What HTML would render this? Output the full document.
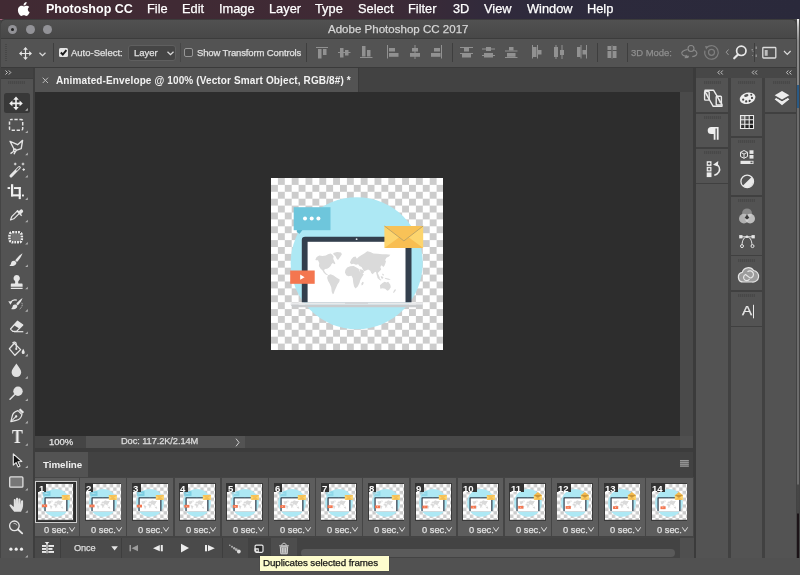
<!DOCTYPE html>
<html><head><meta charset="utf-8"><title>Adobe Photoshop CC 2017</title>
<style>
html,body{margin:0;padding:0}
body{width:800px;height:575px;overflow:hidden;position:relative;background:#515151;font-family:"Liberation Sans",sans-serif;color:#ddd;}
.a{position:absolute}
.t{position:absolute;white-space:nowrap;line-height:1;will-change:transform;-webkit-text-stroke:.25px currentColor}
#menubar{left:0;top:0;width:800px;height:19.200px;background:linear-gradient(90deg,#412a33 0%,#3f2a35 44%,#3a2a37 52%,#322a3b 60%,#2d2a3c 68%,#2a293b 100%)}
#menubar .t{font-size:12.800px;color:#fff;top:3.100px}
#win{left:0;top:19.5px;width:796.5px;height:538.5px;background:#535353;border-radius:4.5px 4.5px 0 0;overflow:hidden}
#title{left:.8px;top:19.700px;width:795.2px;height:18.5px;background:linear-gradient(#515151,#484848);border-radius:4.5px 4.5px 0 0}
#opts{left:0;top:38.5px;width:796.5px;height:28.5px;background:#535353}
.sep{position:absolute;width:1.4px;background:#3e3e3e;top:43px;height:19px}
.tl{position:absolute;width:9px;height:9px;border-radius:50%;background:#929297;top:25.200px}
.ic{position:absolute;overflow:visible}
.grip{background:repeating-linear-gradient(90deg,#484848 0 1px,#4f4f4f 1px 2px)}
.fn{top:483.700px;font-size:9.600px;-webkit-text-stroke:0;font-weight:bold;color:#fff}
.fs{top:525.700px;font-size:9.300px;color:#e2e2e2}
</style></head><body>
<div class="a" style="left:0;top:17px;width:6px;height:8px;background:#a3637c"></div>
<div id="menubar" class="a">
<svg class="ic" style="left:17.600px;top:1.500px" width="12.200" height="14.600" viewBox="0 0 12 15"><path fill="#fff" d="M8.6 0c.1 1-.3 1.900-.85 2.500-.6.650-1.450 1.100-2.250 1.050-.1-.95.350-1.900.85-2.450C6.950.45 7.900.05 8.600 0zM11.300 5.100c-.9.550-1.450 1.400-1.450 2.500 0 1.250.75 2.250 1.850 2.650-.25.800-.65 1.550-1.150 2.250-.65.900-1.300 1.800-2.350 1.800-1 0-1.300-.6-2.450-.6-1.200 0-1.550.6-2.500.65-1 .05-1.750-1-2.400-1.900C-.45 10.600-.9 7.400.5 5.500 1.150 4.550 2.250 3.950 3.400 3.950c1.050 0 1.850.65 2.500.65.600 0 1.600-.75 2.850-.65.900.05 1.950.450 2.550 1.150z"/></svg>
<span class="t" style="left:45.500px;font-weight:bold;font-size:12.500px;top:3.300px;-webkit-text-stroke:0">Photoshop CC</span>
<span class="t" style="left:146.500px">File</span>
<span class="t" style="left:182px">Edit</span>
<span class="t" style="left:218.500px">Image</span>
<span class="t" style="left:268.500px">Layer</span>
<span class="t" style="left:315px">Type</span>
<span class="t" style="left:357.500px">Select</span>
<span class="t" style="left:407.500px">Filter</span>
<span class="t" style="left:452.500px">3D</span>
<span class="t" style="left:484px">View</span>
<span class="t" style="left:526.500px">Window</span>
<span class="t" style="left:586.500px">Help</span>
</div>
<div id="win" class="a"></div>
<div class="a" style="left:0;top:19.200px;width:796.500px;height:6px;border-radius:4.500px 4.500px 0 0;background:#3c3c3c"></div>
<div id="title" class="a"></div>
<div class="a" style="left:0;top:38px;width:796.5px;height:1px;background:#3c3c3c"></div>
<div class="tl" style="left:8px"><div class="a" style="left:3px;top:3px;width:3px;height:3px;border-radius:50%;background:#222"></div></div>
<div class="tl" style="left:25.5px"></div>
<div class="tl" style="left:42.5px"></div>
<span class="t" style="left:327.500px;top:23.900px;font-size:11.500px;color:#d6d6d6;letter-spacing:.02px">Adobe Photoshop CC 2017</span>
<div id="opts" class="a"></div>
<div class="a" style="left:0;top:67px;width:796.5px;height:1px;background:#3a3a3a"></div>
<!-- grip -->
<div class="a" style="left:4.5px;top:44px;width:2px;height:17px;background:repeating-linear-gradient(#474747 0 1px,#535353 1px 2px)"></div>
<!-- move tool icon -->
<svg class="ic" style="left:18.700px;top:47px" width="13" height="13" viewBox="0 0 14 14"><g fill="#e6e6e6"><path d="M7 0l2.600 3H7.650v3.350H11V4.400L14 7l-3 2.600V7.650H7.650V11H9.600L7 14 4.400 11h1.950V7.650H3V9.600L0 7l3-2.600v1.950h3.350V3H4.400z"/></g></svg>
<svg class="ic" style="left:38.500px;top:52px" width="7" height="5" viewBox="0 0 7 5"><path d="M.5.700l3 3 3-3" fill="none" stroke="#dadada" stroke-width="1.250"/></svg>
<div class="sep" style="left:53px"></div>
<!-- checkbox checked -->
<div class="a" style="left:59px;top:48px;width:9px;height:9px;border-radius:1.500px;background:#e4e4e4"></div>
<svg class="ic" style="left:59px;top:48px" width="9" height="9" viewBox="0 0 9 9"><path d="M1.800 4.500l2 2L7.400 2.200" fill="none" stroke="#1a1a1a" stroke-width="1.900"/></svg>
<span class="t" style="left:71px;top:48px;font-size:9.5px;color:#e0e0e0">Auto-Select:</span>
<div class="a" style="left:128.300px;top:44.500px;width:48.200px;height:16px;border-radius:3px;background:#454545;border:1px solid #5f5f5f;box-sizing:border-box"></div>
<span class="t" style="left:133.500px;top:48px;font-size:9.5px;color:#e0e0e0">Layer</span>
<svg class="ic" style="left:166.5px;top:51px" width="7" height="5" viewBox="0 0 7 5"><path d="M.5.700l3 3 3-3" fill="none" stroke="#dadada" stroke-width="1.250"/></svg>
<div class="sep" style="left:180px;background:#464646"></div>
<div class="a" style="left:184.300px;top:48.200px;width:8.500px;height:8.500px;border-radius:2px;border:1px solid #969696;box-sizing:border-box;background:#4a4a4a"></div>
<span class="t" style="left:196.500px;top:48px;font-size:9.5px;color:#e0e0e0;letter-spacing:-.13px">Show Transform Controls</span>
<div class="sep" style="left:306px"></div>
<svg class="a" style="left:0;top:0" width="800" height="575" viewBox="0 0 800 575">
<g fill="#919191" stroke="none">
<!-- 1 align top -->
<rect x="316" y="47" width="12" height="1"/><rect x="318" y="49" width="3.5" height="9.5"/><rect x="323" y="49" width="3.5" height="6"/>
<!-- 2 align v centers -->
<rect x="338" y="52" width="12.5" height="1"/><rect x="340" y="48" width="3.5" height="9.5"/><rect x="345" y="50" width="3.5" height="5.5"/>
<!-- 3 align bottom -->
<rect x="360" y="57" width="12.5" height="1"/><rect x="362" y="46" width="3.5" height="10.500"/><rect x="367" y="50" width="3.5" height="6.500"/>
<!-- 4 align left -->
<rect x="387" y="45" width="1" height="13.500"/><rect x="389" y="48" width="6" height="3.500"/><rect x="389" y="53" width="9.500" height="3.800"/>
<!-- 5 align h centers -->
<rect x="414.5" y="45" width="1" height="14"/><rect x="412" y="48" width="6" height="3.500"/><rect x="410" y="53" width="10" height="3.800"/>
<!-- 6 align right -->
<rect x="441" y="45" width="1" height="13.500"/><rect x="434" y="48" width="6" height="3.500"/><rect x="431" y="53" width="9.500" height="3.800"/>
<!-- 7 dist top -->
<rect x="460" y="47" width="13" height="1"/><rect x="464" y="48" width="5" height="3.500"/><rect x="460" y="53" width="13" height="1"/><rect x="462" y="54" width="9" height="3.500"/>
<!-- 8 dist v centers -->
<rect x="482" y="48.500" width="13" height="1"/><rect x="486" y="47" width="5" height="4"/><rect x="482" y="55" width="13" height="1"/><rect x="484" y="53" width="9" height="4.500"/>
<!-- 9 dist bottom -->
<rect x="509" y="47" width="4.500" height="3.500"/><rect x="505" y="50.500" width="12.500" height="1"/><rect x="507" y="53" width="8.500" height="3.800"/><rect x="505" y="57" width="12.500" height="1"/>
<!-- 10 dist left -->
<rect x="532" y="45" width="1" height="13.500"/><rect x="533" y="47" width="3.500" height="10"/><rect x="537" y="45" width="1" height="13.500"/><rect x="538" y="50" width="3.500" height="4.500"/>
<!-- 11 dist h centers -->
<rect x="554" y="47" width="4" height="10"/><rect x="555.5" y="45" width="1" height="14"/><rect x="560" y="50" width="4" height="5"/><rect x="561.5" y="45" width="1" height="14"/>
<!-- 12 dist right -->
<rect x="577" y="47" width="3.500" height="10"/><rect x="580.5" y="45" width="1" height="13.500"/><rect x="582.500" y="50" width="3.500" height="4.500"/><rect x="586" y="45" width="1" height="13.500"/>
<!-- 13 auto align -->
<rect x="607.5" y="46" width="3.800" height="4"/><rect x="607.5" y="51" width="3.800" height="7"/><rect x="612.700" y="46" width="3.800" height="4"/><rect x="612.700" y="51" width="3.800" height="7"/><rect x="611.700" y="45" width=".8" height="14" fill="#777"/>
</g>
<!-- 3d rotate icon -->
<g fill="none" stroke="#8a8a8a" stroke-width="1.100">
<circle cx="691" cy="48.500" r="3"/>
<path d="M687.500 49.500c-4 .8-6.500 2.500-5.500 4.500 1 1.800 4 2.500 7 2.300M694.300 50c2.500 1.500 3.300 3.500 2 5-1 1-2.500 1.500-4 1.600"/>
<path d="M686 54.500l2.800 3.500-4.300.2z" fill="#8a8a8a" stroke="none"/>
</g>
<!-- roll icon -->
<g fill="none" stroke="#7e7e7e" stroke-width="1.200">
<circle cx="711.500" cy="52.300" r="3"/>
<path d="M706.800 47.500a6.800 6.800 0 1 1-1.900 3.200"/>
<path d="M705 46l3.600.6-2.400 2.800z" fill="#7e7e7e" stroke="none"/>
</g>
<path d="M728.500 49.500l-2.300 2.700 2.300 2.700" fill="none" stroke="#9a9a9a" stroke-width="1"/>
<!-- search -->
<g fill="none" stroke="#e8e8e8" stroke-width="1.700"><circle cx="741.300" cy="50.800" r="4.700"/><path d="M738 54.500l-3.800 3.800" stroke-width="2.200" stroke-linecap="round"/></g>
<!-- clipped dotted sep -->
<rect x="754" y="43" width="1" height="19" fill="#3e3e3e"/>
<g fill="#8a8a8a"><rect x="751.5" y="49" width="1.500" height="1.500"/><rect x="752.500" y="51" width="1" height="1"/><rect x="755.5" y="46.500" width="1.500" height="2.500"/><rect x="755.5" y="54.500" width="1.500" height="2.500"/><rect x="752" y="55" width="1" height="1"/></g>
<!-- workspace icon -->
<rect x="762.800" y="47.500" width="13" height="10.500" fill="none" stroke="#dcdcdc" stroke-width="1.300" rx=".8"/>
<rect x="764.700" y="50" width="3" height="5.800" fill="#bdbdbd"/>
<path d="M784 51l3.300 3.300 3.300-3.300" fill="none" stroke="#ddd" stroke-width="1.200"/>
</svg>
<div class="sep" style="left:451.500px"></div>
<div class="sep" style="left:596.500px"></div>
<div class="sep" style="left:626.500px"></div>
<span class="t" style="left:631px;top:48px;font-size:9.5px;color:#8f8f8f;letter-spacing:-.05px">3D Mode:</span>
<!-- left toolbar -->
<div class="a" style="left:0;top:68px;width:33.5px;height:490px;background:#535353"></div>
<div class="a" style="left:0;top:68px;width:33.5px;height:9.5px;background:#434343"></div>
<div class="a" style="left:0;top:77.500px;width:33.5px;height:1px;background:#3d3d3d"></div>
<div class="a" style="left:33px;top:68px;width:2px;height:490px;background:#3e3e3e"></div>
<div class="a" style="left:0;top:19.5px;width:1px;height:538.5px;background:#444"></div>
<svg class="a" style="left:0;top:0" width="800" height="575" viewBox="0 0 800 575">
<path d="M5.500 70.500l2 2-2 2M8.800 70.500l2 2-2 2" fill="none" stroke="#c8c8c8" stroke-width="1"/>
</svg>
<div class="a grip" style="left:8px;top:80.500px;width:17px;height:3px"></div>
<div class="a" style="left:4px;top:92.800px;width:25.800px;height:19.800px;border-radius:2.500px;background:#383838"></div>
<!-- tab bar + canvas -->
<div class="a" style="left:35px;top:68px;width:658.5px;height:24px;background:#424242"></div>
<div class="a" style="left:35px;top:68px;width:323px;height:24px;background:#535353"></div>
<div class="a" style="left:358px;top:68px;width:1px;height:24px;background:#3b3b3b"></div>
<div class="a" style="left:35px;top:92px;width:644.5px;height:343.500px;background:#2d2d2d"></div>
<div class="a" style="left:679.5px;top:92px;width:14px;height:343.500px;background:#4a4a4a"></div>
<svg class="ic" style="left:41.800px;top:76.600px" width="7" height="7" viewBox="0 0 7 7"><path d="M.7.700l5.300 5.300M6 .7L.7 6" stroke="#bdbdbd" stroke-width="1" fill="none"/></svg>
<span class="t" style="left:56px;top:76.300px;font-size:10px;font-weight:bold;color:#f2f2f2;letter-spacing:.13px;-webkit-text-stroke:0">Animated-Envelope @ 100% (Vector Smart Object, RGB/8#) *</span>
<!-- status bar -->
<div class="a" style="left:35px;top:435.5px;width:658.5px;height:13px;background:#484848"></div>
<div class="a" style="left:35px;top:435.5px;width:50.500px;height:13px;background:#454545"></div>
<div class="a" style="left:86px;top:435.5px;width:158.500px;height:13px;background:#535353"></div>
<div class="a" style="left:679.5px;top:435.5px;width:14px;height:13px;background:#4f4f4f"></div>
<div class="a" style="left:35px;top:448.200px;width:658.5px;height:3.800px;background:#3c3c3c"></div>
<span class="t" style="left:49.200px;top:437px;font-size:9.5px;color:#e4e4e4">100%</span>
<span class="t" style="left:121.300px;top:437.100px;font-size:9.300px;color:#dedede;letter-spacing:-.1px">Doc: 117.2K/2.14M</span>
<svg class="ic" style="left:235px;top:437.500px" width="5" height="9" viewBox="0 0 5 9"><path d="M1 .7l3 3.800-3 3.800" stroke="#d0d0d0" stroke-width="1" fill="none"/></svg>
<!-- timeline panel -->
<div class="a" style="left:35px;top:452px;width:658.5px;height:24.500px;background:#424242"></div>
<div class="a" style="left:35px;top:452px;width:53px;height:24.500px;background:#535353"></div>
<div class="a" style="left:35px;top:476.500px;width:658.5px;height:61px;background:#4a4a4a"></div>
<div class="a" style="left:35px;top:537.500px;width:658.5px;height:20.500px;background:#4a4a4a"></div>
<span class="t" style="left:43px;top:459.500px;font-size:9.800px;font-weight:bold;color:#f0f0f0;letter-spacing:-.05px;-webkit-text-stroke:0">Timeline</span>
<svg class="ic" style="left:680px;top:460.300px" width="8.800" height="6.800" viewBox="0 0 8.800 6.800"><rect width="8.800" height="6.800" fill="#666"/><path d="M0 .5h8.800M0 2.400h8.800M0 4.300h8.800M0 6.200h8.800" stroke="#9a9a9a" stroke-width="1"/></svg>
<!-- right dock -->
<div class="a" style="left:693.5px;top:68px;width:103px;height:490px;background:#414141"></div>
<div class="a" style="left:693.300px;top:68px;width:2.500px;height:490px;background:#3b3b3b"></div>
<div class="a" style="left:696px;top:68px;width:100.500px;height:9.500px;background:#474747"></div>
<div class="a" style="left:696.200px;top:78px;width:31.800px;height:480px;background:#535353"></div>
<div class="a" style="left:730.500px;top:78px;width:31.800px;height:480px;background:#535353"></div>
<div class="a" style="left:764.800px;top:78px;width:31.700px;height:480px;background:#535353"></div>
<!-- right dock panel gaps -->
<div class="a" style="left:696.200px;top:112px;width:31.800px;height:1.500px;background:#404040"></div>
<div class="a" style="left:696.200px;top:147.200px;width:31.800px;height:1.500px;background:#404040"></div>
<div class="a" style="left:696.200px;top:182.500px;width:31.800px;height:1.500px;background:#404040"></div>
<div class="a" style="left:730.500px;top:136px;width:31.800px;height:1.500px;background:#404040"></div>
<div class="a" style="left:730.500px;top:195.200px;width:31.800px;height:1.500px;background:#404040"></div>
<div class="a" style="left:730.500px;top:254.700px;width:31.800px;height:1.500px;background:#404040"></div>
<div class="a" style="left:730.500px;top:290px;width:31.800px;height:1.500px;background:#404040"></div>
<div class="a" style="left:730.500px;top:325.500px;width:31.800px;height:1.500px;background:#404040"></div>
<div class="a" style="left:764.800px;top:112px;width:31.700px;height:1.500px;background:#404040"></div>
<div class="a grip" style="left:703.500px;top:80.500px;width:17px;height:3px"></div>
<div class="a grip" style="left:703.500px;top:116px;width:17px;height:3px"></div>
<div class="a grip" style="left:703.500px;top:151.200px;width:17px;height:3px"></div>
<div class="a grip" style="left:738px;top:80.500px;width:17px;height:3px"></div>
<div class="a grip" style="left:738px;top:140px;width:17px;height:3px"></div>
<div class="a grip" style="left:738px;top:199.200px;width:17px;height:3px"></div>
<div class="a grip" style="left:738px;top:258.700px;width:17px;height:3px"></div>
<div class="a grip" style="left:738px;top:294px;width:17px;height:3px"></div>
<div class="a grip" style="left:772.500px;top:80.500px;width:17px;height:3px"></div>
<svg class="a" style="left:0;top:0" width="800" height="575" viewBox="0 0 800 575">
<g fill="none" stroke="#c4c4c4" stroke-width="1">
<path d="M719.700 70.500l-1.800 2 1.800 2M722.700 70.500l-1.800 2 1.800 2"/>
<path d="M754 70.500l-1.800 2 1.800 2M757 70.500l-1.800 2 1.800 2"/>
<path d="M788.300 70.500l-1.800 2 1.800 2M791.300 70.500l-1.800 2 1.800 2"/>
</g>
<!-- device/3d icon -->
<g fill="none" stroke="#ececec" stroke-width="1.400" stroke-linejoin="round">
<path d="M705 90.200h8.500l8.500 14.300v1.800h-8.800L705 92z"/>
<rect x="704.600" y="91.500" width="4.600" height="8.600" rx=".8"/>
<rect x="716.200" y="96.200" width="5.200" height="8.800" rx=".8"/>
<path d="M706.500 93l2 5.500M718 98l2 5" stroke-width=".8"/>
</g>
<!-- paragraph -->
<path d="M711.300 126.900h7.300v12.900h-1.800V128.500h-1.300v11.300h-1.800v-5.700h-2.400a3.600 3.600 0 0 1 0-7.200z" fill="#efefef"/>
<!-- actions/history icon -->
<g fill="#ececec"><rect x="706.700" y="161.200" width="4.800" height="4.700"/><rect x="706.700" y="166.800" width="4.800" height="4.700"/><rect x="706.700" y="172.400" width="4.800" height="4.700"/></g>
<g fill="#4a4a4a"><rect x="708.600" y="162.300" width="1" height="2.500"/><rect x="707.850" y="163.050" width="2.500" height="1"/><rect x="708.600" y="167.900" width="1" height="2.500"/><rect x="707.850" y="168.650" width="2.500" height="1"/></g>
<path d="M714.300 175.300c4.500-1.300 6.300-5 4.800-8.300-.5-1.200-1.300-2-2.300-2.700" fill="none" stroke="#ececec" stroke-width="1.500"/>
<path d="M713 164.800l5.300-3.700-.5 5.500z" fill="#ececec"/>
<!-- palette -->
<g transform="rotate(-14 747.600 98.300)"><ellipse cx="747.600" cy="98.300" rx="8" ry="5.600" fill="#ededed"/>
<circle cx="743" cy="98.500" r="1.100" fill="#444"/><circle cx="745.500" cy="101" r="1.100" fill="#444"/><circle cx="749" cy="101.300" r="1.100" fill="#444"/><circle cx="752" cy="99" r="1.100" fill="#444"/><circle cx="752" cy="95.800" r="1" fill="#444"/><ellipse cx="747" cy="95.300" rx="2.200" ry="1.300" fill="#535353"/></g>
<!-- swatches grid -->
<defs><linearGradient id="sw" x1="0" y1="0" x2="1" y2="1"><stop offset="0" stop-color="#9a9a9a"/><stop offset=".5" stop-color="#333"/><stop offset="1" stop-color="#000"/></linearGradient></defs>
<rect x="740" y="115" width="14" height="14" fill="url(#sw)"/>
<path d="M740.500 115.500h13v13h-13zM744.800 115v14M749.200 115v14M740 119.800h14M740 124.200h14" fill="none" stroke="#eaeaea" stroke-width="1.100"/>
<!-- 3d cube + squares -->
<g fill="none" stroke="#e6e6e6" stroke-width="1"><path d="M744 150.500l3.500 1.800v4.200l-3.500 1.800-3.500-1.800v-4.200zM740.500 152.300l3.500 1.800 3.500-1.800M744 154.100v4.200"/></g>
<rect x="749.500" y="150.300" width="4" height="3.600" fill="#e6e6e6"/><rect x="749.500" y="155" width="4" height="3.600" fill="#e6e6e6"/><rect x="740.500" y="160.800" width="13" height="3.200" fill="#e6e6e6"/><rect x="750.500" y="161.600" width="2" height="1.600" fill="#555"/>
<!-- adjustments -->
<circle cx="747.200" cy="181.400" r="6.300" fill="none" stroke="#e8e8e8" stroke-width="1.300"/>
<path d="M742.750 185.850a6.300 6.300 0 0 0 8.900-8.900z" fill="#e8e8e8"/>
<!-- channels venn -->
<circle cx="747" cy="213.300" r="4.900" fill="#8a8a8a"/><circle cx="743.900" cy="218.600" r="4.900" fill="#c2c2c2" fill-opacity=".85"/><circle cx="750.100" cy="218.600" r="4.900" fill="#dadada" fill-opacity=".8"/>
<path d="M747 214.500l2.300 3.300-2.300 1.600-2.300-1.600z" fill="#3a3a3a"/>
<!-- paths -->
<g transform="translate(0 .8)"><g fill="none" stroke="#e6e6e6" stroke-width="1"><path d="M741 236h12M742 245c0-6 2.500-9 5-9s5 3 5 9"/></g>
<rect x="739.200" y="234.300" width="3.300" height="3.300" fill="#e6e6e6"/><rect x="751.500" y="234.300" width="3.300" height="3.300" fill="#e6e6e6"/><circle cx="747" cy="236" r="1.300" fill="#e6e6e6"/>
<circle cx="742" cy="245.300" r="1.500" fill="#535353" stroke="#e6e6e6" stroke-width="1"/><circle cx="752.500" cy="245.300" r="1.500" fill="#535353" stroke="#e6e6e6" stroke-width="1"/>
</g>
<!-- CC cloud -->
<g fill="#9c9c9c" stroke="#e6e6e6" stroke-width="1.200"><path d="M743.300 282a4.900 4.900 0 0 1-1-9.700 6.300 6.300 0 0 1 11.300-1.800 5.800 5.800 0 0 1-1.600 11.500z"/></g>
<g fill="none" stroke="#e6e6e6" stroke-width="1.200"><path d="M749.500 279a3.200 3.200 0 0 1-5.500 0 3.200 3.200 0 0 1 1.500-4.500l4.500 3.500a3.600 3.600 0 1 0-2.500-6.300"/></g>
<!-- glyphs A| -->
<rect x="753" y="304.800" width="1" height="13.500" fill="#e8e8e8"/>
<!-- layers icon -->
<path d="M782 91l7.300 4.200-7.300 4.200-7.300-4.200z" fill="#ececec"/>
<path d="M776.300 98.300l-1.600.9 7.300 4.200 1.600-.9 5.700-3.300-1.600-.9-5.700 3.300z" fill="#ececec"/>
<path d="M776.300 98.300l-1.600.9 7.300 6 7.300-6-1.600-.9-5.700 3.300z" fill="#ececec"/>
</svg>
<span class="t" style="left:742px;top:304.300px;font-size:13.500px;color:#e8e8e8;transform:scaleX(1.12);transform-origin:0 0">A</span>
<svg class="a" style="left:0;top:0" width="800" height="575" viewBox="0 0 800 575">
<defs><path id="ct" d="M0 0v-2.600l-2.600 2.600z"/></defs>
<g fill="#b4b4b4">
<use href="#ct" x="27.800" y="110.700"/><use href="#ct" x="27.800" y="133"/><use href="#ct" x="27.800" y="155.200"/><use href="#ct" x="27.800" y="177.600"/><use href="#ct" x="27.800" y="199.900"/><use href="#ct" x="27.800" y="222.300"/><use href="#ct" x="27.800" y="244.600"/><use href="#ct" x="27.800" y="267"/><use href="#ct" x="27.800" y="289.300"/><use href="#ct" x="27.800" y="311.700"/><use href="#ct" x="27.800" y="334"/><use href="#ct" x="27.800" y="356.400"/><use href="#ct" x="27.800" y="378.700"/><use href="#ct" x="27.800" y="401.100"/><use href="#ct" x="27.800" y="423.400"/><use href="#ct" x="27.800" y="445.800"/><use href="#ct" x="27.800" y="468.100"/><use href="#ct" x="27.800" y="490.500"/><use href="#ct" x="27.800" y="512.800"/><use href="#ct" x="27.800" y="557.500"/>
</g>
<!-- 0 move -->
<path fill="#f0f0f0" d="M16 96.600l2.800 3.200h-2v2.800h2.800v-2l3.200 2.800-3.200 2.800v-2h-2.800v2.800h2l-2.800 3.200-2.800-3.200h2v-2.800h-2.800v2l-3.200-2.800 3.200-2.800v2h2.800v-2.800h-2z"/>
<!-- 1 marquee -->
<rect x="9.500" y="119.500" width="13.200" height="10.700" rx="1.500" fill="none" stroke="#e4e4e4" stroke-width="1.500" stroke-dasharray="3.300 1.700" stroke-dashoffset="1.6"/>
<!-- 2 poly lasso -->
<g fill="none" stroke="#e4e4e4" stroke-width="1.400" stroke-linejoin="round"><path d="M14.600 150.300L10 141.300l7.600 3.400 5-4.300-1.400 8.300-5.200 1.700"/><circle cx="14.800" cy="150.300" r="1.300"/><path d="M13.800 151.300l-3.300 2.300M15.300 151.600l-1.300 2.600"/></g>
<!-- 3 wand -->
<path d="M11 176l8.300-8.500" stroke="#e6e6e6" stroke-width="3" stroke-linecap="round" fill="none"/>
<path d="M16.800 170l2.300-2.300" stroke="#535353" stroke-width="1.200" stroke-linecap="round" fill="none"/>
<g stroke="#e6e6e6" stroke-width="1" fill="none"><path d="M15.200 162.700v2.600M13.900 164h2.600M23 162.700v2.600M21.700 164h2.600M23.700 168.300v2.600M22.400 169.600h2.600"/></g>
<!-- 4 crop -->
<g fill="#f0f0f0"><rect x="11" y="184.200" width="2.200" height="12.200"/><rect x="11" y="194.300" width="9.800" height="2.100"/><rect x="7.600" y="187.100" width="2.500" height="1.900"/><rect x="14" y="187.100" width="6.800" height="1.900"/><rect x="18.700" y="187.100" width="2.100" height="12"/><rect x="22" y="194.500" width="1.900" height="1.900"/></g>
<!-- 5 eyedropper -->
<g><path d="M10.500 220l1.200-3.300 6-6 2.100 2.100-6 6z" fill="none" stroke="#e6e6e6" stroke-width="1.200" stroke-linejoin="round"/><path d="M16.300 211.300l4.900 4.900 1-1-1.200-1.200 1.600-1.600a1.700 1.700 0 0 0-2.500-2.500l-1.600 1.600-1.200-1.200z" fill="#e6e6e6"/></g>
<!-- 6 patch -->
<rect x="11.300" y="233.300" width="9" height="7.700" rx="1" fill="#747474"/>
<rect x="9.500" y="232.300" width="12.300" height="10" rx="3" fill="none" stroke="#2e2e2e" stroke-width="2.500"/>
<rect x="9.500" y="232.300" width="12.300" height="10" rx="3" fill="none" stroke="#ececec" stroke-width="2.600" stroke-dasharray="2 .750"/>
<!-- 7 brush -->
<path d="M22.500 253.300c-2.500 1.500-5.500 4.500-7.300 7l1.800 1.600c2.200-2.200 4.700-5.800 5.500-8.600z" fill="#e6e6e6"/>
<path d="M14.500 260.800c-1.800-.3-3 .6-3.400 2.200-.3 1.300-.8 2.300-1.700 2.900 2.300.6 5.300 0 6.700-2 .6-1 .3-2.400-1.600-3.100z" fill="#e6e6e6"/>
<!-- 8 stamp -->
<path d="M16.700 275a3.200 3.200 0 0 1 2 5.700c-.6.600-.6 1.600-.3 2.800h3.200c.6 0 1 .4 1 1v2.300H10.800v-2.300c0-.6.400-1 1-1H15c.3-1.200.3-2.200-.3-2.800a3.200 3.200 0 0 1 2-5.700zM10.800 287.800h11.800v1.200H10.800z" fill="#e6e6e6"/>
<!-- 9 history brush -->
<path d="M22.500 298c-2.300 1.300-4.800 3.800-6.300 6l1.600 1.400c1.900-1.900 4-5 4.700-7.400z" fill="#e6e6e6"/>
<path d="M15.600 304.600c-1.600-.3-2.700.5-3 2-.3 1.100-.7 2-1.500 2.500 2 .6 4.700 0 5.900-1.700.6-.9.300-2.200-1.400-2.800z" fill="#e6e6e6"/>
<path d="M10.500 302.500c1.500-2.300 3.800-3 6.300-2.300" fill="none" stroke="#e6e6e6" stroke-width="1.200"/><path d="M8.300 301.300l4 .3-1.800 3.200z" fill="#e6e6e6"/>
<path d="M21.800 302.800c1 2 .3 4.700-2.200 6.300" fill="none" stroke="#c8c8c8" stroke-width="1" stroke-dasharray="1 1"/>
<!-- 10 eraser -->
<path d="M17.500 321.200l5.300 3.800-6.300 6.300h-3.700l-2.300-2.300z" fill="#535353" stroke="#e6e6e6" stroke-width="1.200" stroke-linejoin="round"/>
<path d="M17.500 321.200l5.300 3.800-3.600 3.600-5.500-3.600z" fill="#e6e6e6"/>
<path d="M14 331.700h9.300" stroke="#e6e6e6" stroke-width="1.200"/>
<!-- 11 bucket -->
<path d="M14.300 343.300l6.300 6.300-5.700 5.700-5.500-6.500z" fill="none" stroke="#e6e6e6" stroke-width="1.300" stroke-linejoin="round"/>
<path d="M16.300 349v-4.800a2 2 0 0 0-3.800-1" fill="none" stroke="#e6e6e6" stroke-width="1.200"/><circle cx="16.300" cy="349" r="1.100" fill="#e6e6e6"/>
<path d="M23.200 348.800c.8 1.500 1.500 2.700 1.500 3.600a1.500 1.500 0 0 1-3 0c0-.9.700-2.100 1.500-3.600z" fill="#e6e6e6"/>
<!-- 12 blur drop -->
<path d="M16.400 363.500c2.300 3.500 4.800 6 4.800 8.800a4.800 4.800 0 0 1-9.600 0c0-2.800 2.500-5.300 4.800-8.800z" fill="#e0e0e0"/>
<!-- 13 dodge -->
<circle cx="18" cy="391.300" r="4.700" fill="#e0e0e0"/><path d="M14.500 394.800L10 399.300" stroke="#e0e0e0" stroke-width="1.500" stroke-linecap="round"/>
<!-- 14 pen -->
<g transform="translate(16.700 415.800) rotate(45)"><path d="M-2.600-7.800h5.200v2.300h-5.200z" fill="#e6e6e6"/><path d="M-2.800-4.600h5.600c1.800 3 2 5.500 0 8.200L0 8.300l-2.800-4.700c-2-2.700-1.800-5.200 0-8.200z" fill="none" stroke="#e6e6e6" stroke-width="1.200" stroke-linejoin="round"/><path d="M0 8V1.500" stroke="#e6e6e6" stroke-width="1"/><circle cx="0" cy=".8" r="1.200" fill="#e6e6e6"/></g>
<!-- 16 path select arrow -->
<path d="M13.300 453.800v11.300l2.800-2.500 2 4.300 1.900-.9-2-4.200 3.800-.3z" fill="#111" stroke="#e8e8e8" stroke-width="1.100" stroke-linejoin="round"/>
<!-- 17 rect -->
<rect x="9.700" y="476.900" width="13.200" height="10.300" rx="1" fill="#777" stroke="#e0e0e0" stroke-width="1.300"/>
<!-- 18 hand -->
<path transform="translate(17.700 0) scale(1.120 1) translate(-16.400 0)" d="M13.300 511.800c-1.300-1.500-2.800-4-4.100-6.100-.5-.9.700-1.800 1.500-1 .8.900 1.500 1.800 2.200 2.300V500c0-1.200 1.700-1.200 1.800 0l.2 4.500v-5.800c0-1.300 1.900-1.300 1.900 0v5.600l.3-5c0-1.200 1.800-1.200 1.800 0v5.500l.5-3.800c.1-1.200 1.800-1.100 1.800.1 0 3.300.2 5.300-.6 7.700-.4 1.200-.9 2.100-1.200 3z" fill="#e0e0e0"/>
<!-- 19 zoom -->
<circle cx="14.400" cy="525.800" r="4.800" fill="none" stroke="#e6e6e6" stroke-width="1.300"/><path d="M18 529.500l4.200 3.800" stroke="#e6e6e6" stroke-width="1.800" stroke-linecap="round"/><path d="M13.500 523.300a2.800 2.800 0 0 1 3.300 2" fill="none" stroke="#ccc" stroke-width=".9"/>
<!-- 20 dots -->
<circle cx="10.900" cy="549.200" r="1.600" fill="#ececec"/><circle cx="16.200" cy="549.200" r="1.600" fill="#ececec"/><circle cx="21.500" cy="549.200" r="1.600" fill="#ececec"/>
</svg>
<span class="t" style="left:11.700px;top:429px;font-family:'Liberation Serif',serif;font-weight:bold;font-size:17.800px;color:#ececec;transform:scaleX(.9);transform-origin:0 0;-webkit-text-stroke:0">T</span>
<svg width="0" height="0" style="position:absolute"><defs>
<pattern id="chk" width="13.800" height="13.800" patternUnits="userSpaceOnUse"><rect width="13.800" height="13.800" fill="#fff"/><rect x="6.900" width="6.900" height="6.900" fill="#ccc"/><rect y="6.900" width="6.900" height="6.900" fill="#ccc"/></pattern>
<pattern id="chk2" width="6.800" height="6.800" patternUnits="userSpaceOnUse"><rect width="6.800" height="6.800" fill="#fff"/><rect x="3.400" width="3.400" height="3.400" fill="#ccc"/><rect y="3.400" width="3.400" height="3.400" fill="#ccc"/></pattern>
<symbol id="art" viewBox="0 0 172.500 172.500">
<circle cx="85.700" cy="85.200" r="66" fill="#ade8f4"/>
<path d="M30.800 124.500V62a3.300 3.300 0 0 1 3.300-3.300h103.100a3.300 3.300 0 0 1 3.300 3.300v62.500z" fill="#333f4d"/>
<rect x="36.600" y="63.800" width="97.900" height="60.700" fill="#fff"/>
<circle cx="85.600" cy="61.200" r=".9" fill="#dfe6ea"/>
<g fill="#dadada"><path transform="translate(40.900 70.200) scale(.08696)" d="M40 130L55 100L85 85L120 90L160 85L185 70L215 60L235 75L250 95L245 120L255 145L270 175L262 185L240 170L225 185L215 205L195 225L175 235L150 240L140 255L150 275L165 290L185 305L175 310L155 300L135 280L120 255L100 235L80 205L85 170L70 140L45 140z M245 55L290 45L335 50L345 70L325 100L300 135L285 120L270 90L250 75z M185 310L215 300L250 315L285 340L320 360L315 385L295 415L280 450L262 490L250 525L240 530L228 500L222 450L205 410L185 375L175 340z M405 222L440 208L480 205L507 218L537 235L552 270L577 290L597 300L577 330L557 365L547 400L527 440L502 462L485 440L475 395L470 345L455 318L420 322L395 310L380 280L385 250z"/><path transform="translate(78.900 70.200) scale(.08696)" d="M0 165L15 130L40 100L65 95L80 120L100 100L130 80L165 60L200 35L235 45L270 60L320 65L370 70L420 70L465 75L450 95L420 110L405 140L395 170L400 200L385 215L365 195L350 215L360 245L340 265L320 285L300 270L280 280L262 300L245 285L235 260L210 245L190 255L165 265L150 245L135 215L110 205L95 185L70 190L40 180L15 185z M110 240L150 250L165 275L140 300L120 280z M300 270L320 285L335 320L350 350L330 345L310 315z M145 385L160 395L150 420L135 430L132 405z M345 425L375 400L400 385L420 395L440 385L465 420L470 450L450 480L430 490L405 465L375 460L350 465z M520 470L530 480L510 510L495 515L505 490z M400 130L415 150L405 185L390 210L385 195L398 165z M20 120L35 110L40 135L25 145z M310 320L340 350L365 365L350 370L320 345z M355 320L385 330L380 350L360 345z M400 340L450 350L470 365L440 362L405 352z M375 290L390 300L385 320L372 305z"/></g>
<path d="M19.600 124.500h132.200v2.300H19.600z" fill="#e9eaeb"/>
<path d="M19.600 126.800h132.200c-1 1.500-2.500 2.400-4.500 2.400H24.100c-2 0-3.500-.9-4.500-2.400z" fill="#c9cbcd"/>
<rect x="74" y="124.500" width="23" height="1.200" fill="#cfd1d3"/>
<rect x="113.400" y="48" width="38.800" height="21.900" fill="#fdd56e"/>
<path d="M113.400 69.900l14.500-10.500 5 3.300 5-3.300 14.300 10.500z" fill="#f8be52"/>
<path d="M113.400 48h38.800l-19.300 14.700z" fill="#f8c257"/>
<path d="M113.400 48l19.500 14.900 19.300-14.900" fill="none" stroke="#a89463" stroke-width=".7"/>
</symbol>
<symbol id="flap" viewBox="0 0 172.500 172.500"><path d="M113.400 48.500l19.400-15 19.400 15z" fill="#f3b94c"/><path d="M113.400 48h38.800l-19.400 13z" fill="#c9953a"/></symbol>
<symbol id="org" viewBox="0 0 172.500 172.500">
<rect x="19.200" y="92.500" width="24.500" height="13.300" fill="#f4764f"/>
<path d="M29.200 96.600l4.400 2.600-4.400 2.600z" fill="#fff"/>
</symbol>
<symbol id="bub" viewBox="0 0 172.500 172.500">
<path d="M25.800 51.500h6l-3.200 4.300-2.800-1.500z" fill="#58b4cb"/>
<rect x="22.700" y="29.200" width="36.800" height="23" fill="#6ec6dc"/>
<circle cx="34" cy="40.500" r="2" fill="#fff"/><circle cx="40.700" cy="40.500" r="2" fill="#fff"/><circle cx="47.400" cy="40.500" r="2" fill="#fff"/>
</symbol>
</defs></svg>
<svg class="a" style="left:271.100px;top:177.800px" width="172" height="172.100"><rect width="172" height="172.100" fill="url(#chk)"/><use href="#art" width="172.500" height="172.500"/><use href="#org" width="172.500" height="172.500"/><use href="#bub" width="172.500" height="172.500"/></svg>
<!-- timeline frames -->
<div class="a" style="left:35px;top:476.500px;width:658.500px;height:61px;background:#454545"></div>
<div class="a" style="left:35.20px;top:478px;width:43.62px;height:58.200px;background:#5d5d5d"></div>
<div class="a" style="left:35.400px;top:480.600px;width:41.600px;height:42.300px;border:1.300px solid #cdcdcd;box-sizing:border-box;background:#2e2e2e"></div>
<div class="a" style="left:37.62px;top:483.300px;width:36.500px;height:37.300px;background:#3a3a3a"></div>
<svg class="a" style="left:38.42px;top:484.100px" width="35" height="35.800"><rect width="35" height="35.800" fill="url(#chk2)"/></svg>
<svg class="a" style="left:37.92px;top:485px" width="36.200" height="36.200"><use href="#art"/><use href="#org" x="0.00" y="0.00"/><use href="#bub" opacity=".75"/></svg>
<div class="a" style="left:37.62px;top:483.300px;width:8.6px;height:8.800px;background:#333"></div>
<span class="t fn" style="left:38.83px">1</span>
<span class="t fs" style="left:44.12px">0 sec.</span>
<svg class="ic" style="left:68.83px;top:527.200px" width="6" height="5" viewBox="0 0 6 5"><path d="M.3.300l2.700 4.100L5.700.3" fill="none" stroke="#dedede" stroke-width="1"/></svg>
<div class="a" style="left:80.30px;top:478px;width:45.70px;height:58.200px;background:#5d5d5d"></div>
<div class="a" style="left:84.80px;top:483.300px;width:36.500px;height:37.300px;background:#3a3a3a"></div>
<svg class="a" style="left:85.60px;top:484.100px" width="35" height="35.800"><rect width="35" height="35.800" fill="url(#chk2)"/></svg>
<svg class="a" style="left:85.10px;top:485px" width="36.200" height="36.200"><use href="#art"/><use href="#org" x="0.42" y="0.15"/><use href="#bub" opacity=".75"/></svg>
<div class="a" style="left:84.80px;top:483.300px;width:8.6px;height:8.800px;background:#333"></div>
<span class="t fn" style="left:86.00px">2</span>
<span class="t fs" style="left:91.30px">0 sec.</span>
<svg class="ic" style="left:116.00px;top:527.200px" width="6" height="5" viewBox="0 0 6 5"><path d="M.3.300l2.700 4.100L5.700.3" fill="none" stroke="#dedede" stroke-width="1"/></svg>
<div class="a" style="left:127.47px;top:478px;width:45.70px;height:58.200px;background:#5d5d5d"></div>
<div class="a" style="left:131.97px;top:483.300px;width:36.500px;height:37.300px;background:#3a3a3a"></div>
<svg class="a" style="left:132.78px;top:484.100px" width="35" height="35.800"><rect width="35" height="35.800" fill="url(#chk2)"/></svg>
<svg class="a" style="left:132.28px;top:485px" width="36.200" height="36.200"><use href="#art"/><use href="#org" x="0.84" y="0.30"/><use href="#bub" opacity=".75"/></svg>
<div class="a" style="left:131.97px;top:483.300px;width:8.6px;height:8.800px;background:#333"></div>
<span class="t fn" style="left:133.17px">3</span>
<span class="t fs" style="left:138.47px">0 sec.</span>
<svg class="ic" style="left:163.17px;top:527.200px" width="6" height="5" viewBox="0 0 6 5"><path d="M.3.300l2.700 4.100L5.700.3" fill="none" stroke="#dedede" stroke-width="1"/></svg>
<div class="a" style="left:174.65px;top:478px;width:45.70px;height:58.200px;background:#5d5d5d"></div>
<div class="a" style="left:179.15px;top:483.300px;width:36.500px;height:37.300px;background:#3a3a3a"></div>
<svg class="a" style="left:179.95px;top:484.100px" width="35" height="35.800"><rect width="35" height="35.800" fill="url(#chk2)"/></svg>
<svg class="a" style="left:179.45px;top:485px" width="36.200" height="36.200"><use href="#art"/><use href="#org" x="1.26" y="0.45"/><use href="#bub" opacity=".75"/></svg>
<div class="a" style="left:179.15px;top:483.300px;width:8.6px;height:8.800px;background:#333"></div>
<span class="t fn" style="left:180.35px">4</span>
<span class="t fs" style="left:185.65px">0 sec.</span>
<svg class="ic" style="left:210.35px;top:527.200px" width="6" height="5" viewBox="0 0 6 5"><path d="M.3.300l2.700 4.100L5.700.3" fill="none" stroke="#dedede" stroke-width="1"/></svg>
<div class="a" style="left:221.82px;top:478px;width:45.70px;height:58.200px;background:#5d5d5d"></div>
<div class="a" style="left:226.32px;top:483.300px;width:36.500px;height:37.300px;background:#3a3a3a"></div>
<svg class="a" style="left:227.12px;top:484.100px" width="35" height="35.800"><rect width="35" height="35.800" fill="url(#chk2)"/></svg>
<svg class="a" style="left:226.62px;top:485px" width="36.200" height="36.200"><use href="#art"/><use href="#org" x="1.68" y="0.60"/><use href="#bub" opacity=".45"/></svg>
<div class="a" style="left:226.32px;top:483.300px;width:8.6px;height:8.800px;background:#333"></div>
<span class="t fn" style="left:227.52px">5</span>
<span class="t fs" style="left:232.82px">0 sec.</span>
<svg class="ic" style="left:257.52px;top:527.200px" width="6" height="5" viewBox="0 0 6 5"><path d="M.3.300l2.700 4.100L5.700.3" fill="none" stroke="#dedede" stroke-width="1"/></svg>
<div class="a" style="left:269.00px;top:478px;width:45.70px;height:58.200px;background:#5d5d5d"></div>
<div class="a" style="left:273.50px;top:483.300px;width:36.500px;height:37.300px;background:#3a3a3a"></div>
<svg class="a" style="left:274.30px;top:484.100px" width="35" height="35.800"><rect width="35" height="35.800" fill="url(#chk2)"/></svg>
<svg class="a" style="left:273.80px;top:485px" width="36.200" height="36.200"><use href="#art"/><use href="#org" x="2.10" y="0.75"/><use href="#bub" opacity=".45"/></svg>
<div class="a" style="left:273.50px;top:483.300px;width:8.6px;height:8.800px;background:#333"></div>
<span class="t fn" style="left:274.70px">6</span>
<span class="t fs" style="left:280.00px">0 sec.</span>
<svg class="ic" style="left:304.70px;top:527.200px" width="6" height="5" viewBox="0 0 6 5"><path d="M.3.300l2.700 4.100L5.700.3" fill="none" stroke="#dedede" stroke-width="1"/></svg>
<div class="a" style="left:316.18px;top:478px;width:45.70px;height:58.200px;background:#5d5d5d"></div>
<div class="a" style="left:320.68px;top:483.300px;width:36.500px;height:37.300px;background:#3a3a3a"></div>
<svg class="a" style="left:321.48px;top:484.100px" width="35" height="35.800"><rect width="35" height="35.800" fill="url(#chk2)"/></svg>
<svg class="a" style="left:320.98px;top:485px" width="36.200" height="36.200"><use href="#art"/><use href="#org" x="2.52" y="0.90"/><use href="#bub" opacity=".45"/></svg>
<div class="a" style="left:320.68px;top:483.300px;width:8.6px;height:8.800px;background:#333"></div>
<span class="t fn" style="left:321.88px">7</span>
<span class="t fs" style="left:327.18px">0 sec.</span>
<svg class="ic" style="left:351.88px;top:527.200px" width="6" height="5" viewBox="0 0 6 5"><path d="M.3.300l2.700 4.100L5.700.3" fill="none" stroke="#dedede" stroke-width="1"/></svg>
<div class="a" style="left:363.35px;top:478px;width:45.70px;height:58.200px;background:#5d5d5d"></div>
<div class="a" style="left:367.85px;top:483.300px;width:36.500px;height:37.300px;background:#3a3a3a"></div>
<svg class="a" style="left:368.65px;top:484.100px" width="35" height="35.800"><rect width="35" height="35.800" fill="url(#chk2)"/></svg>
<svg class="a" style="left:368.15px;top:485px" width="36.200" height="36.200"><use href="#art"/><use href="#org" x="2.94" y="1.05"/><use href="#bub" opacity=".45"/></svg>
<div class="a" style="left:367.85px;top:483.300px;width:8.6px;height:8.800px;background:#333"></div>
<span class="t fn" style="left:369.05px">8</span>
<span class="t fs" style="left:374.35px">0 sec.</span>
<svg class="ic" style="left:399.05px;top:527.200px" width="6" height="5" viewBox="0 0 6 5"><path d="M.3.300l2.700 4.100L5.700.3" fill="none" stroke="#dedede" stroke-width="1"/></svg>
<div class="a" style="left:410.52px;top:478px;width:45.70px;height:58.200px;background:#5d5d5d"></div>
<div class="a" style="left:415.02px;top:483.300px;width:36.500px;height:37.300px;background:#3a3a3a"></div>
<svg class="a" style="left:415.82px;top:484.100px" width="35" height="35.800"><rect width="35" height="35.800" fill="url(#chk2)"/></svg>
<svg class="a" style="left:415.32px;top:485px" width="36.200" height="36.200"><use href="#art"/><use href="#org" x="3.36" y="1.20"/><use href="#bub" opacity=".45"/></svg>
<div class="a" style="left:415.02px;top:483.300px;width:8.6px;height:8.800px;background:#333"></div>
<span class="t fn" style="left:416.22px">9</span>
<span class="t fs" style="left:421.52px">0 sec.</span>
<svg class="ic" style="left:446.22px;top:527.200px" width="6" height="5" viewBox="0 0 6 5"><path d="M.3.300l2.700 4.100L5.700.3" fill="none" stroke="#dedede" stroke-width="1"/></svg>
<div class="a" style="left:457.70px;top:478px;width:45.70px;height:58.200px;background:#5d5d5d"></div>
<div class="a" style="left:462.20px;top:483.300px;width:36.500px;height:37.300px;background:#3a3a3a"></div>
<svg class="a" style="left:463.00px;top:484.100px" width="35" height="35.800"><rect width="35" height="35.800" fill="url(#chk2)"/></svg>
<svg class="a" style="left:462.50px;top:485px" width="36.200" height="36.200"><use href="#art"/><use href="#org" x="3.78" y="1.35"/></svg>
<div class="a" style="left:462.20px;top:483.300px;width:14.6px;height:8.800px;background:#333"></div>
<span class="t fn" style="left:463.40px">10</span>
<span class="t fs" style="left:468.70px">0 sec.</span>
<svg class="ic" style="left:493.40px;top:527.200px" width="6" height="5" viewBox="0 0 6 5"><path d="M.3.300l2.700 4.100L5.700.3" fill="none" stroke="#dedede" stroke-width="1"/></svg>
<div class="a" style="left:504.88px;top:478px;width:45.70px;height:58.200px;background:#5d5d5d"></div>
<div class="a" style="left:509.38px;top:483.300px;width:36.500px;height:37.300px;background:#3a3a3a"></div>
<svg class="a" style="left:510.18px;top:484.100px" width="35" height="35.800"><rect width="35" height="35.800" fill="url(#chk2)"/></svg>
<svg class="a" style="left:509.68px;top:485px" width="36.200" height="36.200"><use href="#art"/><use href="#org" x="4.20" y="1.50"/><use href="#flap"/></svg>
<div class="a" style="left:509.38px;top:483.300px;width:14.6px;height:8.800px;background:#333"></div>
<span class="t fn" style="left:510.57px">11</span>
<span class="t fs" style="left:515.88px">0 sec.</span>
<svg class="ic" style="left:540.58px;top:527.200px" width="6" height="5" viewBox="0 0 6 5"><path d="M.3.300l2.700 4.100L5.700.3" fill="none" stroke="#dedede" stroke-width="1"/></svg>
<div class="a" style="left:552.05px;top:478px;width:45.70px;height:58.200px;background:#5d5d5d"></div>
<div class="a" style="left:556.55px;top:483.300px;width:36.500px;height:37.300px;background:#3a3a3a"></div>
<svg class="a" style="left:557.35px;top:484.100px" width="35" height="35.800"><rect width="35" height="35.800" fill="url(#chk2)"/></svg>
<svg class="a" style="left:556.85px;top:485px" width="36.200" height="36.200"><use href="#art"/><use href="#org" x="4.62" y="1.65"/><use href="#flap"/></svg>
<div class="a" style="left:556.55px;top:483.300px;width:14.6px;height:8.800px;background:#333"></div>
<span class="t fn" style="left:557.75px">12</span>
<span class="t fs" style="left:563.05px">0 sec.</span>
<svg class="ic" style="left:587.75px;top:527.200px" width="6" height="5" viewBox="0 0 6 5"><path d="M.3.300l2.700 4.100L5.700.3" fill="none" stroke="#dedede" stroke-width="1"/></svg>
<div class="a" style="left:599.22px;top:478px;width:45.70px;height:58.200px;background:#5d5d5d"></div>
<div class="a" style="left:603.72px;top:483.300px;width:36.500px;height:37.300px;background:#3a3a3a"></div>
<svg class="a" style="left:604.52px;top:484.100px" width="35" height="35.800"><rect width="35" height="35.800" fill="url(#chk2)"/></svg>
<svg class="a" style="left:604.02px;top:485px" width="36.200" height="36.200"><use href="#art"/><use href="#org" x="5.04" y="1.80"/><use href="#flap"/></svg>
<div class="a" style="left:603.72px;top:483.300px;width:14.6px;height:8.800px;background:#333"></div>
<span class="t fn" style="left:604.92px">13</span>
<span class="t fs" style="left:610.22px">0 sec.</span>
<svg class="ic" style="left:634.92px;top:527.200px" width="6" height="5" viewBox="0 0 6 5"><path d="M.3.300l2.700 4.100L5.700.3" fill="none" stroke="#dedede" stroke-width="1"/></svg>
<div class="a" style="left:646.40px;top:478px;width:46.90px;height:58.200px;background:#5d5d5d"></div>
<div class="a" style="left:650.90px;top:483.300px;width:36.500px;height:37.300px;background:#3a3a3a"></div>
<svg class="a" style="left:651.70px;top:484.100px" width="35" height="35.800"><rect width="35" height="35.800" fill="url(#chk2)"/></svg>
<svg class="a" style="left:651.20px;top:485px" width="36.200" height="36.200"><use href="#art"/><use href="#org" x="5.46" y="1.95"/><use href="#flap"/></svg>
<div class="a" style="left:650.90px;top:483.300px;width:14.6px;height:8.800px;background:#333"></div>
<span class="t fn" style="left:652.10px">14</span>
<span class="t fs" style="left:657.40px">0 sec.</span>
<svg class="ic" style="left:682.10px;top:527.200px" width="6" height="5" viewBox="0 0 6 5"><path d="M.3.300l2.700 4.100L5.700.3" fill="none" stroke="#dedede" stroke-width="1"/></svg>
<!-- timeline controls -->
<div class="a" style="left:35px;top:536.200px;width:658.500px;height:1.300px;background:#444"></div>
<div class="a" style="left:35px;top:537.500px;width:658.500px;height:20.500px;background:#4a4a4a"></div>
<div class="a" style="left:248px;top:537.500px;width:23px;height:20.500px;background:#424242"></div>
<div class="a" style="left:271px;top:537.500px;width:26px;height:20.500px;background:#4d4d4d"></div>
<div class="a" style="left:297px;top:537.500px;width:383px;height:20.500px;background:#434343"></div>
<div class="a" style="left:680px;top:537.500px;width:13.500px;height:20.500px;background:#4f4f4f"></div>
<div class="a" style="left:301px;top:548.500px;width:374px;height:8.500px;border-radius:4.500px;background:#5a5a5a"></div>
<div class="a" style="left:59.500px;top:537.500px;width:1.200px;height:20.500px;background:#3e3e3e"></div>
<div class="a" style="left:121px;top:537.500px;width:1.200px;height:20.500px;background:#3e3e3e"></div>
<div class="a" style="left:221.500px;top:537.500px;width:1.200px;height:20.500px;background:#3e3e3e"></div>
<span class="t" style="left:74px;top:543.500px;font-size:9.200px;color:#dedede;letter-spacing:-.15px">Once</span>
<svg class="a" style="left:0;top:0" width="800" height="575" viewBox="0 0 800 575">
<!-- convert to timeline icon -->
<g fill="#ececec"><rect x="42" y="545" width="4" height="1.900"/><rect x="42" y="548" width="4" height="1.900"/><rect x="42" y="551" width="4" height="1.900"/><rect x="48.300" y="545" width="5.700" height="1.900"/><rect x="48.300" y="548" width="4.200" height="1.900"/><rect x="48.300" y="551" width="5.700" height="1.900"/><rect x="46.400" y="542.800" width="1.200" height="10.500"/><path d="M44.600 542h4.800l-2.400 2.200z"/></g>
<path d="M111.300 546.200h6.600l-3.300 4.300z" fill="#e4e4e4"/>
<!-- first frame (dim) -->
<g fill="#9c9c9c"><rect x="129.500" y="545" width="1.500" height="6.300"/><path d="M138 545v6.300l-6.500-3.150z"/></g>
<!-- prev -->
<g fill="#ececec"><path d="M159.800 545v6.300l-6.800-3.150z"/><rect x="160.800" y="545" width="2" height="6.300"/></g>
<!-- play -->
<path d="M181 543.800l8 4.300-8 4.300z" fill="#ececec"/>
<!-- next -->
<g fill="#ececec"><rect x="205" y="545" width="2" height="6.300"/><path d="M208 545v6.300l6.800-3.150z"/></g>
<!-- tween -->
<g fill="#b0b0b0"><circle cx="229.800" cy="545.300" r=".8"/><circle cx="232" cy="546.700" r="1"/><circle cx="234.200" cy="548.200" r="1.200"/><circle cx="236.300" cy="549.700" r="1.400"/><circle cx="238.800" cy="551.500" r="1.900" fill="#dcdcdc"/></g>
<!-- duplicate -->
<rect x="255.100" y="545.100" width="7.900" height="7.200" rx="1.200" fill="#2c2c2c" stroke="#e8e8e8" stroke-width="1.200"/>
<path d="M254.500 548.300h4.300v4.600h-2.300l-2-2z" fill="#e8e8e8"/><rect x="256.300" y="549.600" width="1.500" height="1.600" fill="#3a3a3a"/>
<!-- trash -->
<path d="M280.300 546.800h7.400l-.5 7h-6.400z" fill="#8e8e8e" stroke="#d6d6d6" stroke-width="1"/>
<g fill="none" stroke="#d6d6d6" stroke-width="1"><path d="M279.200 545.800h9.600M281.800 545.500c0-3 4.400-3 4.400 0"/><path d="M282.400 547.800v5M284 547.800v5M285.600 547.800v5" stroke="#e2e2e2" stroke-width=".8"/></g>
</svg>
<!-- tooltip -->
<div class="a" style="left:260px;top:555.500px;width:129px;height:15px;background:#fdfccd;box-shadow:0 0 1px rgba(0,0,0,.35)"></div>
<span class="t" style="left:263px;top:558.200px;font-size:9.800px;color:#161616;letter-spacing:-.1px">Duplicates selected frames</span>
<!-- right window edge -->
<div class="a" style="left:796px;top:19.500px;width:4px;height:538.500px;background:#434343"></div>
<div class="a" style="left:797.200px;top:19.200px;width:1.700px;height:539px;background:linear-gradient(#f4f4f4 0,#bbb 8px,#8c8c8c 22px,#858585 66px,#2a5a85 66.500px,#2a5a85 89px,#6c6c6c 89.500px,#6c6c6c 465px,#474747 466px,#454545 494px,#1b1317 495px,#1b1317 100%)"></div>
</body></html>
